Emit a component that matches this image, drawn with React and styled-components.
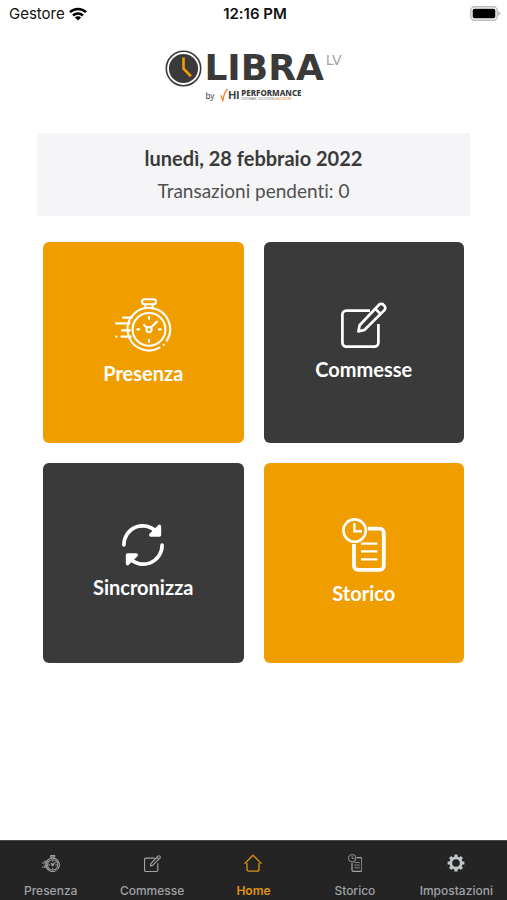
import styled, { createGlobalStyle } from 'styled-components';

const TILES = [
  { id: 'presenza', label: 'Presenza', color: '#f09d00', Icon: StopwatchIcon },
  { id: 'commesse', label: 'Commesse', color: '#3a3a3a', Icon: EditIcon },
  { id: 'sincronizza', label: 'Sincronizza', color: '#3a3a3a', Icon: SyncIcon },
  { id: 'storico', label: 'Storico', color: '#f09d00', Icon: HistoryIcon },
];

const TABS = [
  { id: 'presenza', label: 'Presenza', Icon: StopwatchIcon, size: 17 },
  { id: 'commesse', label: 'Commesse', Icon: EditIcon, size: 17 },
  { id: 'home', label: 'Home', Icon: HomeIcon, size: 18 },
  { id: 'storico', label: 'Storico', Icon: HistoryIcon, size: 18 },
  { id: 'impostazioni', label: 'Impostazioni', Icon: GearIcon, size: 18 },
];

const App = () => {
  return (
    <>
      <GlobalStyle />
      <Screen>
        <StatusBar>
          <Carrier>
            Gestore
            <WifiIcon />
          </Carrier>
          <Time>12:16 PM</Time>
          <Battery>
            <BatteryIcon />
          </Battery>
        </StatusBar>

        <Logo>
          <LogoRow>
            <ClockLogo />
            <LogoName>LIBRA</LogoName>
            <LogoSuffix>LV</LogoSuffix>
          </LogoRow>
          <ByRow>
            <By>by</By>
            <CheckLogo />
            <Hi>HI</Hi>
            <Company>
              <CompanyName>PERFORMANCE</CompanyName>
              <Tagline>
                SOFTWARE, SOLUTIONS <Accent>AND MORE</Accent>
              </Tagline>
            </Company>
          </ByRow>
        </Logo>

        <Summary>
          <Today>lunedì, 28 febbraio 2022</Today>
          <Pending>Transazioni pendenti: 0</Pending>
        </Summary>

        <TileGrid>
          {TILES.map(({ id, label, color, Icon }) => (
            <Tile key={id} type="button" $color={color}>
              <Icon />
              {label}
            </Tile>
          ))}
        </TileGrid>

        <TabBar>
          {TABS.map(({ id, label, Icon, size }) => (
            <Tab key={id} href={`#${id}`} $active={id === 'home'}>
              <TabIcon>
                <Icon size={size} bold />
              </TabIcon>
              {label}
            </Tab>
          ))}
        </TabBar>
      </Screen>
    </>
  );
};

export default App;

function WifiIcon() {
  return (
    <svg width="18" height="14" viewBox="0 0 18 14" aria-hidden="true">
      <g fill="none" stroke="#000" strokeWidth="2.5">
        <path d="M1 5.2a11.4 11.4 0 0 1 16 0" />
        <path d="M4 8.5a7.2 7.2 0 0 1 10 0" />
      </g>
      <path d="M9 13.6 5.9 10.5a4.4 4.4 0 0 1 6.2 0z" />
    </svg>
  );
}

function BatteryIcon() {
  return (
    <svg width="31" height="15" viewBox="0 0 31 15" aria-hidden="true">
      <rect
        x="0.8"
        y="0.8"
        width="26.4"
        height="13.4"
        rx="4"
        fill="#fff"
        stroke="#b9b9b9"
        strokeWidth="1.4"
      />
      <rect x="2.7" y="2.8" width="22.6" height="9.4" rx="1.8" />
      <path d="M28.3 5.2 30.6 7.5 28.3 9.8z" fill="#aaa" />
    </svg>
  );
}

function ClockLogo() {
  return (
    <svg width="37" height="37" viewBox="0 0 37 37" aria-hidden="true">
      <circle
        cx="18.5"
        cy="18.5"
        r="17.2"
        fill="#fff"
        stroke="#3a3a3a"
        strokeWidth="1.6"
      />
      <circle cx="18.5" cy="18.5" r="14.6" fill="#3a3a3a" />
      <path
        d="M18.5 7.5v11.3l7.5 7.4"
        fill="none"
        stroke="#f09d00"
        strokeWidth="2.6"
      />
    </svg>
  );
}

function CheckLogo() {
  return (
    <svg width="8" height="14" viewBox="0 0 8 14" aria-hidden="true">
      <path
        d="M.8 7.2 2.8 12.4C3.6 7.6 5 3.6 7.6 1"
        fill="none"
        stroke="#ef8532"
        strokeWidth="1.4"
      />
    </svg>
  );
}

function StopwatchIcon({ size = 54, bold }) {
  return (
    <svg
      width={(size * 57) / 54}
      height={size}
      viewBox="0 0 57 54"
      fill="none"
      stroke="currentColor"
      strokeWidth={bold ? 3.4 : 2.1}
      strokeLinecap="round"
      aria-hidden="true"
    >
      <rect x="27" y="1.2" width="14" height="5" rx="2.5" />
      <path d="M30.4 6.5v4M37.6 6.5v4" />
      <path d="M44.5 49.6A21.3 21.3 0 1 1 51.8 42.6M48.6 46.9l.2-.2" />
      <circle cx="34" cy="31.4" r="16.4" />
      <path d="M34 19v2M34 42v2M22.4 31.4h1.8M44 31.4h1.8" />
      <circle cx="34" cy="31.6" r="2.6" />
      <path d="M36 29.6l6-6M32 29.8l-3-2.8" />
      <path d="M8 19.6h9M1.2 25.4h13.4M7 32.4h8M6.4 38.6h9.4M1.2 38.6h.2" />
    </svg>
  );
}

function EditIcon({ size = 46, bold }) {
  return (
    <svg
      width={size}
      height={size}
      viewBox="0 0 46 46"
      fill="none"
      stroke="currentColor"
      strokeWidth={bold ? 3.2 : 2.7}
      strokeLinejoin="round"
      aria-hidden="true"
    >
      <path d="M29 8.6H5.4a4 4 0 0 0-4 4v28a4 4 0 0 0 4 4h28a4 4 0 0 0 4-4V22" />
      <path d="M18.6 23.2 37.8 3a3.3 3.3 0 0 1 4.8 0l.6.6a3.3 3.3 0 0 1 0 4.8L23.4 28l-6 1.4z" />
      <path d="m34.2 6.6 5.4 5.4" />
    </svg>
  );
}

function SyncIcon({ size = 42 }) {
  return (
    <svg
      width={size}
      height={size}
      viewBox="0 0 42 42"
      fill="none"
      stroke="currentColor"
      strokeWidth="3.6"
      strokeLinecap="round"
      strokeLinejoin="round"
      aria-hidden="true"
    >
      <path d="M1.9 21A18.8 18.8 0 0 1 34.6 8" />
      <path d="M40.1 21A18.8 18.8 0 0 1 7.4 34" />
      <path d="M37.4 2.4v8.6h-8.6z" fill="currentColor" />
      <path d="M5.6 39.6V31h8.6z" fill="currentColor" />
    </svg>
  );
}

function HistoryIcon({ size = 54 }) {
  return (
    <svg
      width={(size * 44) / 54}
      height={size}
      viewBox="0 0 44 54"
      fill="none"
      stroke="currentColor"
      aria-hidden="true"
    >
      <circle cx="12.6" cy="12.6" r="11.2" strokeWidth="2.6" />
      <path d="M12.4 5v8.2H20" strokeWidth="2.4" />
      <path
        d="M25.8 10.6h12a4 4 0 0 1 4 4v33.2a4 4 0 0 1-4 4H16a4 4 0 0 1-4-4V26"
        strokeWidth="3.8"
      />
      <path d="M19 25.6h16.4M19 33.4h16.4M19 41.4h16.4" strokeWidth="2.4" />
    </svg>
  );
}

function HomeIcon({ size = 18 }) {
  return (
    <svg
      width={size}
      height={size}
      viewBox="0 0 18 18"
      fill="none"
      stroke="currentColor"
      strokeWidth="1.3"
      strokeLinecap="round"
      strokeLinejoin="round"
      aria-hidden="true"
    >
      <path d="M.8 9.4 9 1.2l8.2 8.2" />
      <path d="M3 9.4v5.8a2 2 0 0 0 2 2h8a2 2 0 0 0 2-2V9.4" />
    </svg>
  );
}

function GearIcon({ size = 18 }) {
  return (
    <svg
      width={size}
      height={size}
      viewBox="0 0 18 18"
      fill="none"
      stroke="#c3c6c9"
      aria-hidden="true"
    >
      <circle cx="9" cy="9" r="5.2" strokeWidth="2.8" />
      <path
        d="M9 .6v2.6M9 14.8v2.6M.6 9h2.6M14.8 9h2.6M3.1 3.1l1.8 1.8M13.1 13.1l1.8 1.8M3.1 14.9l1.8-1.8M13.1 4.9l1.8-1.8"
        strokeWidth="3.2"
      />
    </svg>
  );
}

const GlobalStyle = createGlobalStyle`
  * {
    box-sizing: border-box;
  }

  body {
    margin: 0;
    background-color: #fff;
    font-family: Lato, 'Noto Sans', sans-serif;
    font-variant-ligatures: none;
  }

  svg {
    display: block;
    flex-shrink: 0;
  }
`;

const Screen = styled.div`
  display: flex;
  flex-direction: column;
  min-height: 100vh;
`;

const StatusBar = styled.header`
  display: grid;
  grid-template-columns: 1fr auto 1fr;
  align-items: center;
  height: 27px;
  padding: 0 6px 0 9px;
  color: #111;
  font-family: Inter, sans-serif;
  font-size: 15px;
`;

const Carrier = styled.div`
  display: flex;
  align-items: center;
  gap: 4px;
`;

const Time = styled.time`
  font-weight: 600;
`;

const Battery = styled.div`
  justify-self: end;
`;

const Logo = styled.div`
  display: flex;
  flex-direction: column;
  align-items: center;
  height: 106px;
  padding-top: 22px;
`;

const LogoRow = styled.div`
  display: flex;
  align-items: center;
  gap: 2px;
  height: 38px;
`;

const LogoName = styled.span`
  color: #3a3a3a;
  font-family: 'DejaVu Sans', sans-serif;
  font-weight: 700;
  font-size: 36px;
  line-height: 38px;
`;

const LogoSuffix = styled.span`
  align-self: flex-start;
  padding-top: 4px;
  color: #a3a3a3;
  font-family: 'DejaVu Sans', sans-serif;
  font-size: 14px;
  line-height: 14px;
`;

const ByRow = styled.div`
  display: flex;
  align-items: center;
  height: 16px;
  color: #3a3a3a;
  font-family: 'Noto Sans', sans-serif;
`;

const By = styled.span`
  padding-right: 6px;
  font-size: 8px;
`;

const Hi = styled.span`
  padding-right: 2px;
  font-family: 'Liberation Sans', sans-serif;
  font-weight: 700;
  font-size: 11px;
`;

const Company = styled.div`
  display: flex;
  flex-direction: column;
`;

const CompanyName = styled.span`
  font-weight: 800;
  font-size: 8px;
  line-height: 8px;
`;

const Tagline = styled.span`
  color: #777;
  font-size: 3px;
  line-height: 4px;
`;

const Accent = styled.span`
  color: #ef8532;
`;

const Summary = styled.section`
  display: flex;
  flex-direction: column;
  align-items: center;
  gap: 5px;
  margin: 0 37px;
  padding: 11px 0;
  background-color: #f5f5f7;
  color: #3a3a3a;
`;

const Today = styled.h1`
  margin: 0;
  font-weight: 700;
  font-size: 20px;
  line-height: 28px;
`;

const Pending = styled.p`
  margin: 0;
  color: #505050;
  font-size: 19px;
  line-height: 28px;
`;

const TileGrid = styled.main`
  display: grid;
  grid-template-columns: 1fr 1fr;
  gap: 20px;
  padding: 26px 43px;
`;

const Tile = styled.button`
  display: flex;
  flex-direction: column;
  align-items: center;
  justify-content: center;
  gap: 7px;
  aspect-ratio: 1;
  padding: 0;
  border: none;
  border-radius: 6px;
  background-color: ${props => props.$color};
  color: #fff;
  font-family: inherit;
  font-weight: 700;
  font-size: 20px;
  line-height: 28px;
  cursor: pointer;
`;

const TabBar = styled.nav`
  display: grid;
  grid-template-columns: repeat(5, 1fr);
  height: 60px;
  margin-top: auto;
  border-top: 1px solid #4a4a4a;
  background-color: #242424;
`;

const Tab = styled.a`
  display: flex;
  flex-direction: column;
  align-items: center;
  gap: 5px;
  padding-top: 7px;
  color: ${props => (props.$active ? '#e09510' : '#a0a2a5')};
  font-family: Inter, sans-serif;
  font-weight: ${props => (props.$active ? 600 : 500)};
  font-size: 12px;
  line-height: 16px;
  text-decoration: none;
`;

const TabIcon = styled.span`
  display: flex;
  align-items: center;
  height: 30px;
`;
